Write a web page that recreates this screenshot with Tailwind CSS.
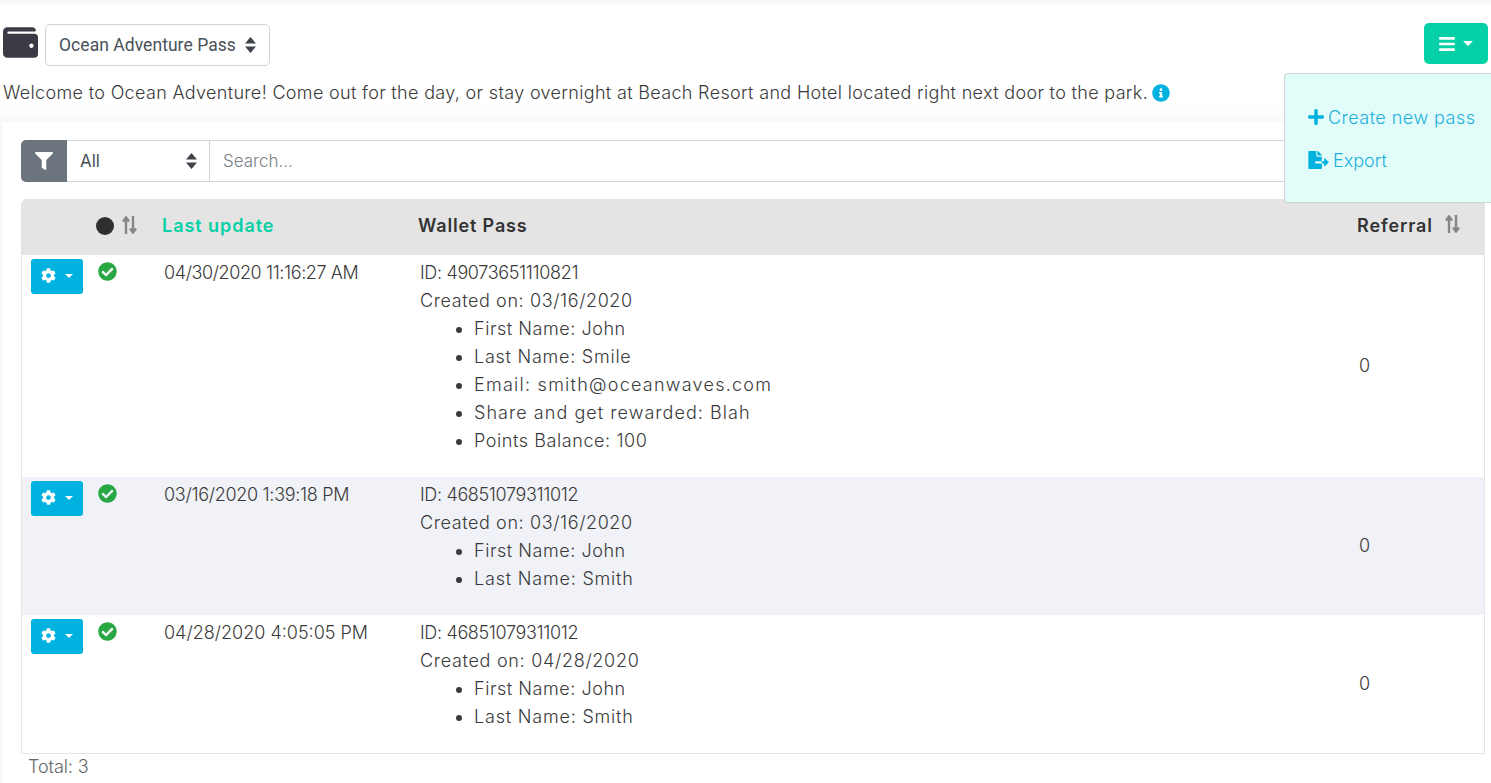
<!DOCTYPE html>
<html lang="en">
<head>
    <meta charset="UTF-8">
    <meta name="viewport" content="width=device-width, initial-scale=1.0">
    <title>Wallet Passes</title>
    <script src="https://cdn.jsdelivr.net/npm/@tailwindcss/browser@4"></script>
</head>
<body class="bg-[#f8f8f9] font-['Inter',sans-serif] font-light text-[18px] text-[#3a3a3a] h-[783px] overflow-hidden relative">
    <!-- page head -->
    <header class="h-[122px] bg-[linear-gradient(#f6f6f6,#fff_6px,#fff_108px,#f7f7f7)] pt-[23px] px-[3px]">
        <div class="flex items-start justify-between">
            <div class="flex items-center gap-[7px] pt-px">
                <svg class="w-[35px] h-[35px] text-[#3b3b46] -mt-[6px]" viewBox="0 0 512 512" fill="currentColor"><path d="M461.2 128H80c-8.84 0-16-7.16-16-16s7.16-16 16-16h384c8.84 0 16-7.16 16-16 0-26.51-21.49-48-48-48H64C28.65 32 0 60.65 0 96v320c0 35.35 28.65 64 64 64h397.2c28.02 0 50.8-21.53 50.8-48V176c0-26.47-22.78-48-50.8-48zM416 336c-17.67 0-32-14.33-32-32s14.33-32 32-32 32 14.33 32 32-14.33 32-32 32z"/></svg>
                <div class="w-[225px] h-[42px] bg-white border border-[#ced4da] rounded-[5px] flex items-center justify-between pl-[13px] pr-[13px] font-['Roboto',sans-serif] font-normal text-[17.5px] tracking-[0.05px] text-[#495057]">
                    <span>Ocean Adventure Pass</span>
                    <svg class="w-[11px] h-[16px]" viewBox="0 0 11 16" fill="#3f444b"><path d="M5.5 0 11 6.5H0zM5.5 16 0 9.5h11z"/></svg>
                </div>
            </div>
            <button class="w-[64px] h-[41px] bg-[#06d1a6] rounded-[5px] flex items-center justify-center gap-[8px]">
                <svg class="w-[16px] h-[18px]" viewBox="0 0 448 512" fill="#fff"><path d="M16 132h416c8.837 0 16-7.163 16-16V76c0-8.837-7.163-16-16-16H16C7.163 60 0 67.163 0 76v40c0 8.837 7.163 16 16 16zm0 160h416c8.837 0 16-7.163 16-16v-40c0-8.837-7.163-16-16-16H16c-8.837 0-16 7.163-16 16v40c0 8.837 7.163 16 16 16zm0 160h416c8.837 0 16-7.163 16-16v-40c0-8.837-7.163-16-16-16H16c-8.837 0-16 7.163-16 16v40c0 8.837 7.163 16 16 16z"/></svg>
                <svg class="w-[10px] h-[5px]" viewBox="0 0 10 5" fill="#fff"><path d="M0 0h10L5 5z"/></svg>
            </button>
        </div>
        <p class="mt-[13px] leading-[28px] flex items-center gap-[4px] whitespace-nowrap">
            <span class="tracking-[0.33px]">Welcome to Ocean Adventure! Come out for the day, or stay overnight at Beach Resort and Hotel located right next door to the park.</span>
            <svg class="w-[18px] h-[18px]" viewBox="0 0 512 512" fill="#00b2e0"><path d="M256 8C119.043 8 8 119.083 8 256c0 136.997 111.043 248 248 248s248-111.003 248-248C504 119.083 392.957 8 256 8zm0 110c23.196 0 42 18.804 42 42s-18.804 42-42 42-42-18.804-42-42 18.804-42 42-42zm56 254c0 6.627-5.373 12-12 12h-88c-6.627 0-12-5.373-12-12v-24c0-6.627 5.373-12 12-12h12v-64h-12c-6.627 0-12-5.373-12-12v-24c0-6.627 5.373-12 12-12h64c6.627 0 12 5.373 12 12v100h12c6.627 0 12 5.373 12 12v24z"/></svg>
        </p>
    </header>

    <!-- card -->
    <main class="ml-[3px] h-[661px] bg-white pt-[18px] pl-[18px] pr-[6px]">
        <div class="flex h-[42px] text-[17px]">
            <div class="w-[46px] bg-[#6c757d] rounded-l-[5px] flex items-center justify-center">
                <svg class="w-[18px] h-[18px]" viewBox="0 0 512 512" fill="#fff"><path d="M487.976 0H24.028C2.71 0-8.047 25.866 7.058 40.971L192 225.941V432c0 7.831 3.821 15.17 10.237 19.662l80 55.98C298.02 518.69 320 507.493 320 487.98V225.941l184.947-184.97C520.021 25.896 509.338 0 487.976 0z"/></svg>
            </div>
            <div class="w-[143px] border border-l-0 border-[#ced4da] flex items-center justify-between pl-[13px] pr-[12px] pt-px font-normal text-[#495057]">
                <span>All</span>
                <svg class="w-[11px] h-[16px] -mt-px" viewBox="0 0 11 16" fill="#3f444b"><path d="M5.5 0 11 6.5H0zM5.5 16 0 9.5h11z"/></svg>
            </div>
            <div class="flex-1 border border-l-0 border-[#ced4da] flex items-center pl-[13px] pt-px text-[#7a8087]">Search...</div>
        </div>

        <table class="mt-[17px] w-[1464px] table-fixed border-separate border-spacing-0">
            <colgroup>
                <col class="w-[65px]"><col class="w-[66px]"><col class="w-[256px]"><col class="w-[939px]"><col class="w-[138px]">
            </colgroup>
            <thead class="text-[#333]">
                <tr class="h-[56px] bg-[#e4e4e4]">
                    <th class="rounded-tl-[6px]"></th>
                    <th class="pl-[10px] font-medium text-left">
                        <div class="flex items-center gap-[8px] -mt-[2px]">
                            <span class="w-[18px] h-[18px] rounded-full bg-[#2f2f2f]"></span>
                            <svg class="w-[15px] h-[18px] -mt-[3px]" viewBox="0 0 15 18" fill="none" stroke="#85858a" stroke-width="2.4"><path d="M4 18V2M1 5.5l3-4 3 4M11 0v16M8 12.5l3 4 3-4"/></svg>
                        </div>
                    </th>
                    <th class="pl-[10px] pb-[4px] font-semibold text-left text-[#06d1a6] tracking-[0.95px]">Last update</th>
                    <th class="pl-[10px] pb-[4px] font-semibold text-left tracking-[0.85px]">Wallet Pass</th>
                    <th class="pl-[10px] pb-[4px] font-semibold text-left rounded-tr-[6px]">
                        <div class="flex items-center gap-[12px]">
                            <span class="tracking-[0.9px]">Referral</span>
                            <svg class="w-[15px] h-[18px] -mt-[3px]" viewBox="0 0 15 18" fill="none" stroke="#85858a" stroke-width="2.4"><path d="M4 18V2M1 5.5l3-4 3 4M11 0v16M8 12.5l3 4 3-4"/></svg>
                        </div>
                    </th>
                </tr>
            </thead>
            <tbody class="leading-[28px]">
                <tr class="align-top">
                    <td class="pl-[9px] pt-[4px] border-l border-[#e4e4e4]">
                        <button class="w-[52px] h-[35px] pb-[2px] bg-[#00b2e0] rounded-[3px] flex items-center justify-center gap-[9px]">
                            <svg class="w-[15px] h-[15px]" viewBox="0 0 512 512" fill="#fff"><path d="M487.4 315.7l-42.6-24.6c4.3-23.2 4.3-47 0-70.2l42.6-24.6c4.9-2.8 7.1-8.6 5.5-14-11.1-35.6-30-67.8-54.7-94.6-3.8-4.1-10-5.1-14.8-2.3L380.8 110c-17.9-15.4-38.5-27.3-60.8-35.1V25.8c0-5.6-3.9-10.5-9.4-11.7-36.7-8.2-74.3-7.8-109.2 0-5.5 1.2-9.4 6.1-9.4 11.7V75c-22.2 7.9-42.8 19.8-60.8 35.1L88.7 85.5c-4.9-2.8-11-1.9-14.8 2.3-24.7 26.7-43.6 58.9-54.7 94.6-1.7 5.4.6 11.2 5.5 14L67.3 221c-4.3 23.2-4.3 47 0 70.2l-42.6 24.6c-4.9 2.8-7.1 8.6-5.5 14 11.1 35.6 30 67.8 54.7 94.6 3.8 4.1 10 5.1 14.8 2.3l42.6-24.6c17.9 15.4 38.5 27.3 60.8 35.1v49.2c0 5.6 3.9 10.5 9.4 11.7 36.7 8.2 74.3 7.8 109.2 0 5.5-1.2 9.4-6.1 9.4-11.7v-49.2c22.2-7.9 42.8-19.8 60.8-35.1l42.6 24.6c4.9 2.8 11 1.9 14.8-2.3 24.7-26.7 43.6-58.9 54.7-94.6 1.5-5.5-.7-11.3-5.6-14.1zM256 336c-44.1 0-80-35.9-80-80s35.9-80 80-80 80 35.9 80 80-35.9 80-80 80z"/></svg>
                            <svg class="w-[8px] h-[4px]" viewBox="0 0 8 4" fill="#fff"><path d="M0 0h8L4 4z"/></svg>
                        </button>
                    </td>
                    <td class="pl-[12px] pt-[7px]">
                        <svg class="w-[19px] h-[19px]" viewBox="0 0 512 512" fill="#28a745"><path d="M504 256c0 136.967-111.033 248-248 248S8 392.967 8 256 119.033 8 256 8s248 111.033 248 248zM227.314 387.314l184-184c6.248-6.248 6.248-16.379 0-22.627l-22.627-22.627c-6.248-6.249-16.379-6.249-22.628 0L216 308.118l-70.059-70.059c-6.248-6.248-16.379-6.248-22.628 0l-22.627 22.627c-6.248 6.248-6.248 16.379 0 22.627l104 104c6.249 6.249 16.379 6.249 22.628.001z"/></svg>
                    </td>
                    <td class="pl-[12px] pt-[4px] tracking-[-0.4px]">04/30/2020 11:16:27 AM</td>
                    <td class="pl-[12px] pt-[4px] pb-[6px]">
                        <div class="tracking-[-0.35px]">ID: 49073651110821</div>
                        <div class="tracking-[0.6px]">Created on: 03/16/2020</div>
                        <ul class="list-disc pl-[54px] mb-[16px]">
                            <li class="tracking-[0.55px]">First Name: John</li>
                            <li class="tracking-[0.75px]">Last Name: Smile</li>
                            <li class="tracking-[1.25px]">Email: smith@oceanwaves.com</li>
                            <li class="tracking-[1.05px]">Share and get rewarded: Blah</li>
                            <li class="tracking-[0.58px]">Points Balance: 100</li>
                        </ul>
                    </td>
                    <td class="pl-[12px] align-middle border-r border-[#e4e4e4]">0</td>
                </tr>
                <tr class="align-top bg-[#f0f2f7]">
                    <td class="pl-[9px] pt-[4px] border-l border-[#e4e4e4]">
                        <button class="w-[52px] h-[35px] pb-[2px] bg-[#00b2e0] rounded-[3px] flex items-center justify-center gap-[9px]">
                            <svg class="w-[15px] h-[15px]" viewBox="0 0 512 512" fill="#fff"><path d="M487.4 315.7l-42.6-24.6c4.3-23.2 4.3-47 0-70.2l42.6-24.6c4.9-2.8 7.1-8.6 5.5-14-11.1-35.6-30-67.8-54.7-94.6-3.8-4.1-10-5.1-14.8-2.3L380.8 110c-17.9-15.4-38.5-27.3-60.8-35.1V25.8c0-5.6-3.9-10.5-9.4-11.7-36.7-8.2-74.3-7.8-109.2 0-5.5 1.2-9.4 6.1-9.4 11.7V75c-22.2 7.9-42.8 19.8-60.8 35.1L88.7 85.5c-4.9-2.8-11-1.9-14.8 2.3-24.7 26.7-43.6 58.9-54.7 94.6-1.7 5.4.6 11.2 5.5 14L67.3 221c-4.3 23.2-4.3 47 0 70.2l-42.6 24.6c-4.9 2.8-7.1 8.6-5.5 14 11.1 35.6 30 67.8 54.7 94.6 3.8 4.1 10 5.1 14.8 2.3l42.6-24.6c17.9 15.4 38.5 27.3 60.8 35.1v49.2c0 5.6 3.9 10.5 9.4 11.7 36.7 8.2 74.3 7.8 109.2 0 5.5-1.2 9.4-6.1 9.4-11.7v-49.2c22.2-7.9 42.8-19.8 60.8-35.1l42.6 24.6c4.9 2.8 11 1.9 14.8-2.3 24.7-26.7 43.6-58.9 54.7-94.6 1.5-5.5-.7-11.3-5.6-14.1zM256 336c-44.1 0-80-35.9-80-80s35.9-80 80-80 80 35.9 80 80-35.9 80-80 80z"/></svg>
                            <svg class="w-[8px] h-[4px]" viewBox="0 0 8 4" fill="#fff"><path d="M0 0h8L4 4z"/></svg>
                        </button>
                    </td>
                    <td class="pl-[12px] pt-[7px]">
                        <svg class="w-[19px] h-[19px]" viewBox="0 0 512 512" fill="#28a745"><path d="M504 256c0 136.967-111.033 248-248 248S8 392.967 8 256 119.033 8 256 8s248 111.033 248 248zM227.314 387.314l184-184c6.248-6.248 6.248-16.379 0-22.627l-22.627-22.627c-6.248-6.249-16.379-6.249-22.628 0L216 308.118l-70.059-70.059c-6.248-6.248-16.379-6.248-22.628 0l-22.627 22.627c-6.248 6.248-6.248 16.379 0 22.627l104 104c6.249 6.249 16.379 6.249 22.628.001z"/></svg>
                    </td>
                    <td class="pl-[12px] pt-[4px] tracking-[-0.3px]">03/16/2020 1:39:18 PM</td>
                    <td class="pl-[12px] pt-[4px] pb-[6px]">
                        <div class="tracking-[-0.35px]">ID: 46851079311012</div>
                        <div class="tracking-[0.6px]">Created on: 03/16/2020</div>
                        <ul class="list-disc pl-[54px] mb-[16px]">
                            <li class="tracking-[0.55px]">First Name: John</li>
                            <li class="tracking-[0.8px]">Last Name: Smith</li>
                        </ul>
                    </td>
                    <td class="pl-[12px] align-middle border-r border-[#e4e4e4]">0</td>
                </tr>
                <tr class="align-top">
                    <td class="pl-[9px] pt-[4px] border-l border-b border-[#e4e4e4]">
                        <button class="w-[52px] h-[35px] pb-[2px] bg-[#00b2e0] rounded-[3px] flex items-center justify-center gap-[9px]">
                            <svg class="w-[15px] h-[15px]" viewBox="0 0 512 512" fill="#fff"><path d="M487.4 315.7l-42.6-24.6c4.3-23.2 4.3-47 0-70.2l42.6-24.6c4.9-2.8 7.1-8.6 5.5-14-11.1-35.6-30-67.8-54.7-94.6-3.8-4.1-10-5.1-14.8-2.3L380.8 110c-17.9-15.4-38.5-27.3-60.8-35.1V25.8c0-5.6-3.9-10.5-9.4-11.7-36.7-8.2-74.3-7.8-109.2 0-5.5 1.2-9.4 6.1-9.4 11.7V75c-22.2 7.9-42.8 19.8-60.8 35.1L88.7 85.5c-4.9-2.8-11-1.9-14.8 2.3-24.7 26.7-43.6 58.9-54.7 94.6-1.7 5.4.6 11.2 5.5 14L67.3 221c-4.3 23.2-4.3 47 0 70.2l-42.6 24.6c-4.9 2.8-7.1 8.6-5.5 14 11.1 35.6 30 67.8 54.7 94.6 3.8 4.1 10 5.1 14.8 2.3l42.6-24.6c17.9 15.4 38.5 27.3 60.8 35.1v49.2c0 5.6 3.9 10.5 9.4 11.7 36.7 8.2 74.3 7.8 109.2 0 5.5-1.2 9.4-6.1 9.4-11.7v-49.2c22.2-7.9 42.8-19.8 60.8-35.1l42.6 24.6c4.9 2.8 11 1.9 14.8-2.3 24.7-26.7 43.6-58.9 54.7-94.6 1.5-5.5-.7-11.3-5.6-14.1zM256 336c-44.1 0-80-35.9-80-80s35.9-80 80-80 80 35.9 80 80-35.9 80-80 80z"/></svg>
                            <svg class="w-[8px] h-[4px]" viewBox="0 0 8 4" fill="#fff"><path d="M0 0h8L4 4z"/></svg>
                        </button>
                    </td>
                    <td class="pl-[12px] pt-[7px] border-b border-[#e4e4e4]">
                        <svg class="w-[19px] h-[19px]" viewBox="0 0 512 512" fill="#28a745"><path d="M504 256c0 136.967-111.033 248-248 248S8 392.967 8 256 119.033 8 256 8s248 111.033 248 248zM227.314 387.314l184-184c6.248-6.248 6.248-16.379 0-22.627l-22.627-22.627c-6.248-6.249-16.379-6.249-22.628 0L216 308.118l-70.059-70.059c-6.248-6.248-16.379-6.248-22.628 0l-22.627 22.627c-6.248 6.248-6.248 16.379 0 22.627l104 104c6.249 6.249 16.379 6.249 22.628.001z"/></svg>
                    </td>
                    <td class="pl-[12px] pt-[4px] tracking-[0px] border-b border-[#e4e4e4]">04/28/2020 4:05:05 PM</td>
                    <td class="pl-[12px] pt-[4px] pb-[6px] border-b border-[#e4e4e4]">
                        <div class="tracking-[-0.35px]">ID: 46851079311012</div>
                        <div class="tracking-[0.7px]">Created on: 04/28/2020</div>
                        <ul class="list-disc pl-[54px] mb-[16px]">
                            <li class="tracking-[0.55px]">First Name: John</li>
                            <li class="tracking-[0.8px]">Last Name: Smith</li>
                        </ul>
                    </td>
                    <td class="pl-[12px] align-middle border-r border-b border-[#e4e4e4]">0</td>
                </tr>
            </tbody>
        </table>
        <p class="pl-[7px] mt-[-1px] leading-[28px] text-[#666] tracking-[-0.1px]">Total: 3</p>
    </main>

    <!-- open actions menu -->
    <div class="absolute left-[1284px] top-[73px] w-[207px] h-[130px] bg-[#e2fcf9] border border-r-0 border-[#cfd4d6] rounded-l-[4px] pl-[23px] pt-[29px] text-[#1cb0dd]">
        <div class="flex items-center gap-[4px] h-[28px]">
            <svg class="w-[16px] h-[18px]" viewBox="0 0 448 512" fill="#00b2e0"><path d="M416 208H272V64c0-17.67-14.33-32-32-32h-32c-17.67 0-32 14.33-32 32v144H32c-17.67 0-32 14.33-32 32v32c0 17.67 14.33 32 32 32h144v144c0 17.67 14.33 32 32 32h32c17.67 0 32-14.33 32-32V304h144c17.67 0 32-14.33 32-32v-32c0-17.67-14.33-32-32-32z"/></svg>
            <span class="tracking-[0.47px]">Create new pass</span>
        </div>
        <div class="flex items-center gap-[4px] h-[28px] mt-[15px]">
            <svg class="w-[21px] h-[18px]" viewBox="0 0 576 512" fill="#00b2e0"><path d="M384 121.9c0-6.3-2.5-12.4-7-16.9L279.1 7c-4.5-4.5-10.6-7-17-7H256v128h128zM571 308l-95.7-96.4c-10.1-10.1-27.4-3-27.4 11.3V288h-64v64h64v65.2c0 14.3 17.3 21.4 27.4 11.3L571 332c6.6-6.6 6.6-17.4 0-24zm-379 28v-32c0-8.8 7.2-16 16-16h176V160H248c-13.2 0-24-10.8-24-24V0H24C10.7 0 0 10.7 0 24v464c0 13.3 10.7 24 24 24h336c13.3 0 24-10.7 24-24V352H208c-8.8 0-16-7.2-16-16z"/></svg>
            <span>Export</span>
        </div>
    </div>
</body>
</html>
